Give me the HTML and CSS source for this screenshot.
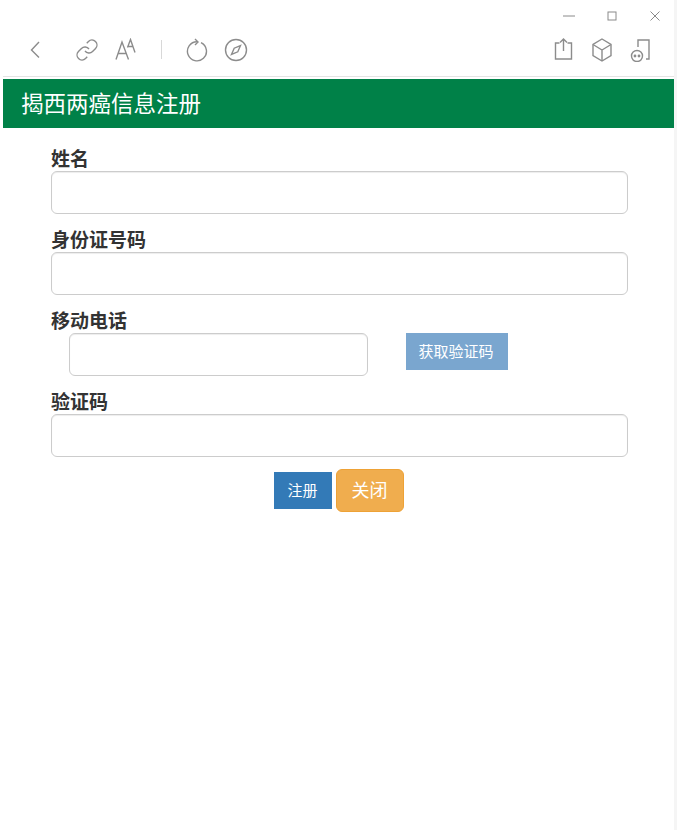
FILE: index.html
```html
<!DOCTYPE html>
<html lang="zh-CN">
  <head>
    <meta charset="UTF-8" />
    <meta name="viewport" content="width=device-width, initial-scale=1.0" />
    <title>揭西两癌信息注册</title>
    <link rel="stylesheet" href="styles.css">
  </head>
  <body>
    <div class="window">
      <div class="title-bar">
        <svg class="win-icon" viewBox="0 0 12 12"><path d="M0 6h12"/></svg>
        <svg class="win-icon" viewBox="0 0 12 12"><rect x="2" y="2" width="8" height="8"/></svg>
        <svg class="win-icon" viewBox="0 0 12 12"><path d="M1.500 1.500l9 9M10.500 1.500l-9 9"/></svg>
      </div>

      <div class="toolbar">
        <div class="tool-group">
          <svg class="tool tool-back" viewBox="0 0 24 24"><path d="M15 4L7.500 12l7.500 7.500"/></svg>
          <svg class="tool" viewBox="0 0 24 24">
            <path d="M10 13a5 5 0 0 0 7.540.54l3-3a5 5 0 0 0-7.070-7.070l-1.720 1.710"/>
            <path d="M14 11a5 5 0 0 0-7.540-.54l-3 3a5 5 0 0 0 7.070 7.070l1.710-1.710"/>
          </svg>
          <svg class="tool" viewBox="0 0 24 24">
            <path d="M2 21.500L8 4l6.500 17.500M4 15.500h8.500"/>
            <path d="M13.500 9.500L16.500 1.500 21 14.500M14.500 8.500h5"/>
          </svg>
          <span class="tool-divider"></span>
          <svg class="tool" viewBox="0 0 24 24">
            <path d="M16 4.700A9.500 9.500 0 1 1 12 3.800"/>
            <path d="M10 1l3 3-3 3"/>
          </svg>
          <svg class="tool" viewBox="0 0 24 24">
            <circle cx="12" cy="12" r="10.500"/>
            <path d="M16.500 7.500l-2.700 6.300-6.300 2.700 2.700-6.300z"/>
          </svg>
        </div>
        <div class="tool-group">
          <svg class="tool" viewBox="0 0 24 24">
            <path d="M8.500 5H4.500v16h16V5h-4"/>
            <path d="M12.500 13V1M9 4.500L12.500 1 16 4.500"/>
          </svg>
          <svg class="tool" viewBox="0 0 24 24">
            <path d="M12 1l9 5.500v11L12 23l-9-5.500v-11z"/>
            <path d="M3 6.500l9 5.500 9-5.500M12 12v11"/>
          </svg>
          <svg class="tool" viewBox="0 0 24 24">
            <path d="M9 9V2h11v19h-3"/>
            <circle cx="8" cy="18" r="5.500"/>
            <circle cx="6" cy="18" r=".7"/>
            <circle cx="10" cy="18" r=".7"/>
          </svg>
        </div>
      </div>

      <h1 class="page-title">揭西两癌信息注册</h1>

      <form class="reg-form">
        <div class="form-group">
          <label for="name">姓名</label>
          <input id="name" class="form-control" type="text" />
        </div>
        <div class="form-group">
          <label for="idcard">身份证号码</label>
          <input id="idcard" class="form-control" type="text" />
        </div>
        <div class="form-group">
          <label for="phone">移动电话</label>
          <div class="phone-row">
            <input id="phone" class="form-control phone-input" type="text" />
            <button class="btn btn-code" type="button">获取验证码</button>
          </div>
        </div>
        <div class="form-group">
          <label for="code">验证码</label>
          <input id="code" class="form-control" type="text" />
        </div>
        <div class="form-actions">
          <button class="btn btn-submit" type="button">注册</button>
          <button class="btn btn-close" type="button">关闭</button>
        </div>
      </form>
    </div>
  </body>
</html>
```

FILE: styles.css
```css
* {
  margin: 0;
  padding: 0;
  box-sizing: border-box;
  font-family: "Liberation Sans", "Noto Sans CJK SC", sans-serif;
}

body {
  background-color: white;
  height: 830px;
  overflow: hidden;
}

.window {
  height: 830px;
  border-right: 3px solid #f5f5f5;
  border-left: 3px solid white;
}

/* Window chrome */
.title-bar {
  height: 28px;
  display: flex;
  justify-content: flex-end;
  align-items: center;
  gap: 31px;
  padding: 4px 13px 0 0;
}

.win-icon {
  width: 12px;
  height: 12px;
  fill: none;
  stroke: #8a8a8a;
  stroke-width: 1;
}

.toolbar {
  height: 49px;
  display: flex;
  justify-content: space-between;
  align-items: center;
  padding: 0 21px 5px 21px;
  border-bottom: 1px solid #e4e4e4;
}

.tool-group {
  display: flex;
  align-items: center;
  gap: 15px;
}

.tool {
  width: 24px;
  height: 24px;
  fill: none;
  stroke: #8c8c8c;
  stroke-width: 1.400;
}

.tool-back {
  margin-right: 12px;
}

.tool-divider {
  width: 1px;
  height: 19px;
  margin: 0 8px;
  background-color: #d8d8d8;
}

/* Header band */
.page-title {
  margin-top: 2px;
  height: 49px;
  padding: 2px 0 0 18px;
  background-color: #008148;
  color: white;
  font-size: 22.500px;
  font-weight: normal;
  line-height: 47px;
}

/* Form */
.reg-form {
  padding: 21px 46px 0 48px;
}

.form-group {
  margin-bottom: 16px;
}

label {
  display: block;
  height: 22px;
  color: #333333;
  font-size: 19px;
  font-weight: bold;
  line-height: 22px;
}

.form-control {
  display: block;
  width: 100%;
  height: 43px;
  background-color: white;
  border: 1px solid #cccccc;
  border-radius: 6px;
  box-shadow: inset 0 1px 1px rgba(0, 0, 0, 0.075);
}

.phone-row {
  display: flex;
  align-items: flex-start;
  gap: 38px;
  padding-left: 18px;
}

.phone-input {
  width: 299px;
}

.btn {
  border: none;
  color: white;
  font-size: 15px;
}

.btn-code {
  width: 102px;
  height: 37px;
  padding: 0 2px 2px 0;
  background-color: #7aa6cf;
}

.form-actions {
  display: flex;
  justify-content: center;
  align-items: center;
  gap: 4px;
  margin-top: -4px;
  padding-right: 2px;
}

.btn-submit {
  width: 58px;
  height: 37px;
  padding-bottom: 2px;
  background-color: #337ab7;
}

.btn-close {
  width: 68px;
  height: 43px;
  padding-bottom: 3px;
  background-color: #f0ad4e;
  border: 1px solid #eea236;
  border-radius: 6px;
  font-size: 18px;
}
```
